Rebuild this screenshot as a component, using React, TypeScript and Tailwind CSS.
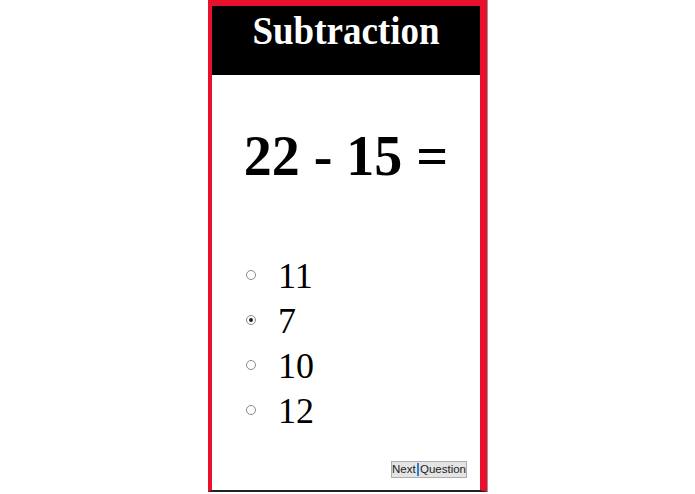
const options = [
  { label: "11", checked: false },
  { label: "7", checked: true },
  { label: "10", checked: false },
  { label: "12", checked: false },
];

function Radio({ checked }: { checked: boolean }) {
  return (
    <span className="-mt-[3px] flex h-[10px] w-[10px] shrink-0 items-center justify-center rounded-full border border-[#8a8a8a] bg-white">
      {checked ? <span className="h-[4px] w-[4px] rounded-full bg-[#222]" /> : null}
    </span>
  );
}

export default function App() {
  return (
    <div className="min-h-screen bg-white">
      <div className="mx-auto flex h-[492px] w-[279px] flex-col border-t-[6px] border-l-4 border-r-[7px] border-b-2 border-[#e8112d] border-b-[#222] shadow-[1px_0_0_#9a9a9a]">
        <div className="h-[69px] shrink-0 bg-black pt-[6px] text-center font-['Liberation_Serif',serif] text-[37px] font-bold leading-none text-white">
          <span className="inline-block scale-y-110">Subtraction</span>
        </div>

        <div className="mt-[53px] text-center font-['Liberation_Serif',serif] text-[56px] font-bold leading-none text-black">
          22 - 15 =
        </div>

        <div className="mt-[70px] flex flex-col pl-[34px] font-['Liberation_Serif',serif] text-[36px] leading-[45px] text-black">
          {options.map((o) => (
            <label key={o.label} className="flex items-center gap-[22px]">
              <Radio checked={o.checked} />
              <span>{o.label}</span>
            </label>
          ))}
        </div>

        <div className="mt-[27px] flex justify-end pr-[13px]">
          <button className="flex h-[17px] w-[76px] items-center justify-center border border-[#adadad] bg-[#e4e4e4] font-['Liberation_Sans',sans-serif] text-[11.5px] leading-none text-[#222]">
            Next
            <span className="mx-px h-[13px] w-[3px] bg-[#2f7fd8]" />
            Question
          </button>
        </div>
      </div>
    </div>
  );
}
